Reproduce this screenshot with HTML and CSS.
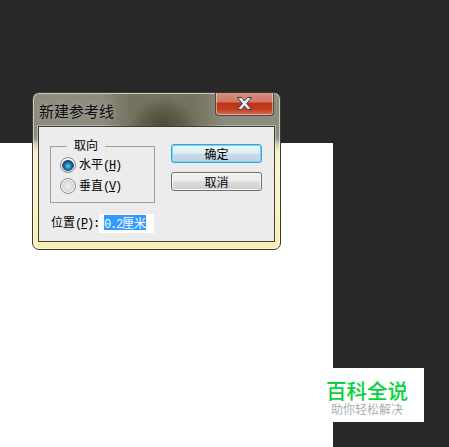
FILE: index.html
```html
<!DOCTYPE html>
<html lang="zh">
<head>
<meta charset="utf-8">
<title>新建参考线</title>
<link rel="stylesheet" href="styles.css">
</head>
<body>
<main class="canvas"></main>

<section class="dialog">
  <div class="glass"></div>
  <header class="titlebar">
    <h1 class="title">新建参考线</h1>
    <button class="close" type="button" aria-label="关闭">
      <svg width="17" height="15" viewBox="0 0 17 15"><path class="close-x" d="M1.5 1.5H5.5L8.5 5 11.5 1.5H15.5L10.8 7.5 15.5 13.5H11.5L8.5 10 5.5 13.5H1.5L6.2 7.5Z"/></svg>
    </button>
  </header>
  <div class="panel">
    <div class="main-row">
      <div class="group">
        <span class="legend">取向</span>
        <label class="radio-row"><span class="radio radio-on"></span><span class="radio-text">水平<span class="latin">(<u>H</u>)</span></span></label>
        <label class="radio-row"><span class="radio"></span><span class="radio-text">垂直<span class="latin">(<u>V</u>)</span></span></label>
      </div>
      <div class="buttons">
        <button class="btn btn-default" type="button">确定</button>
        <button class="btn" type="button">取消</button>
      </div>
    </div>
    <div class="position-row">
      <span class="pos-label">位置<span class="latin">(<u>P</u>):</span></span>
      <span class="field"><span class="selected"><span class="latin">0.2</span>厘米</span></span>
    </div>
  </div>
</section>

<aside class="watermark">
  <div class="wm-title">百科全说</div>
  <div class="wm-sub">助你轻松解决</div>
</aside>
</body>
</html>
```
FILE: styles.css
```css
* { box-sizing: border-box; }
html, body { margin: 0; height: 100%; }
body {
  background: #282828;
  padding-top: 143px;
  overflow: hidden;
  font-family: "Noto Sans CJK SC", "Liberation Sans", sans-serif;
  font-size: 12px;
  color: #000;
}
.latin {
  font-family: "Liberation Mono", monospace;
  font-size: 12px;
  letter-spacing: -1.2px;
}
.canvas { width: 333px; height: 304px; background: #fff; }

.dialog {
  position: absolute;
  left: 32px;
  top: 92px;
  width: 249px;
  height: 158px;
  border: 1px solid #3a3a34;
  border-radius: 7px;
  overflow: hidden;
  padding: 0 5px 7px;
  display: flex;
  flex-direction: column;
  background: linear-gradient(180deg, #8e8d7f 0, #8b8a7b 40px, #98978a 46px, #d9d6b4 52px, #f7f0c4 60px, #fdf4c0 80px, #f9eeae 100%);
  box-shadow: inset 0 0 0 1px rgba(255, 255, 255, .55);
}
.glass {
  position: absolute;
  left: 70px;
  top: 1px;
  width: 120px;
  height: 32px;
  background:
    radial-gradient(ellipse 28% 90% at 50% 100%, #4c4935 0, rgba(76, 73, 53, .55) 55%, rgba(76, 73, 53, 0) 100%),
    linear-gradient(90deg, rgba(116, 115, 96, 0) 0, #747360 22%, #747360 78%, rgba(116, 115, 96, 0) 100%);
}
.titlebar {
  position: relative;
  height: 33px;
  flex: none;
  display: flex;
  justify-content: space-between;
  align-items: flex-start;
}
.title {
  margin: 9px 0 0 1px;
  font-size: 15px;
  line-height: 17px;
  font-weight: 400;
  color: #0c0c10;
  text-shadow: 0 0 5px rgba(205, 205, 195, .6);
}
.close {
  width: 59px;
  height: 24px;
  margin: -1px 1px 0 0;
  padding: 0;
  display: flex;
  align-items: center;
  justify-content: center;
  border: 1px solid #4d4a40;
  border-top: 0;
  border-radius: 0 0 4px 4px;
  box-shadow: inset 0 0 0 1px rgba(255, 255, 255, .45);
  background: linear-gradient(180deg, #dc8f7e 0, #cf7866 42%, #bb3418 50%, #c63d1b 75%, #d0705a 100%);
}
.close-x { fill: #ececf0; stroke: #3c3f4c; stroke-width: 1; stroke-linejoin: round; }

.panel {
  flex: 1;
  border: 1px solid #3e3e38;
  background: #ececec;
  padding: 17px 11px 0;
  display: flex;
  flex-direction: column;
  box-shadow: 0 0 0 1px rgba(255, 255, 255, .35);
}
.main-row { display: flex; align-items: flex-start; }
.group {
  position: relative;
  width: 105px;
  height: 57px;
  margin-top: 2px;
  padding: 10px 0 0 9px;
  border: 1px solid #a0a0a0;
  display: flex;
  flex-direction: column;
  gap: 5px;
}
.legend {
  position: absolute;
  left: 16px;
  top: -10px;
  padding: 0 7px;
  line-height: 16px;
  background: #ececec;
}
.radio-row { display: flex; align-items: center; gap: 3px; height: 16px; line-height: 16px; }
.radio-text { white-space: nowrap; }
.radio {
  width: 16px;
  height: 16px;
  border-radius: 50%;
  border: 1px solid #8e8e8e;
  background: radial-gradient(circle at 50% 50%, #f0f0f0 0, #d6d6d6 60%, #f4f4f4 100%);
  box-shadow: inset 0 0 0 1px #f6f6f6;
  flex: none;
}
.radio-on {
  background: radial-gradient(circle at 50% 58%, #6fd0f5 0, #1b75b0 30%, #0f3f66 52%, #e8e8e8 60%, #f4f4f4 100%);
}
.buttons {
  margin-left: 16px;
  display: flex;
  flex-direction: column;
  gap: 9px;
}
.btn {
  width: 91px;
  height: 19px;
  padding: 0;
  border: 1px solid #707070;
  border-radius: 3px;
  font: inherit;
  line-height: 15px;
  color: #000;
  background: linear-gradient(180deg, #f2f2f2 0, #ebebeb 48%, #dcdcdc 52%, #cfcfcf 100%);
  box-shadow: inset 0 0 0 1px #f8f8f8;
}
.btn-default {
  border-color: #2fa8d8;
  background: linear-gradient(180deg, #eaf6fb 0, #dfeef5 48%, #c8dde8 52%, #bcd2de 100%);
  box-shadow: inset 0 0 0 1px #7fd2ee;
}
.position-row {
  margin-top: 9px;
  padding-left: 1px;
  display: flex;
  align-items: center;
  line-height: 19px;
}
.pos-label { width: 48px; white-space: nowrap; }
.field {
  width: 55px;
  height: 19px;
  background: #fff;
  padding: 1px 0 0 5px;
  display: block;
  line-height: 15px;
}
.selected { background: #3399ff; color: #fff; display: inline-block; height: 15px; white-space: nowrap; }

.watermark {
  position: absolute;
  left: 326px;
  top: 368px;
  width: 98px;
  height: 54px;
  background: linear-gradient(90deg, transparent 7px, #fff 7px);
  padding-top: 10px;
  white-space: nowrap;
}
.wm-title { color: #06d23c; font-size: 20.5px; line-height: 24px; font-weight: 500; }
.wm-sub { color: #adadad; font-size: 12px; line-height: 14px; margin-left: 5px; }
```
